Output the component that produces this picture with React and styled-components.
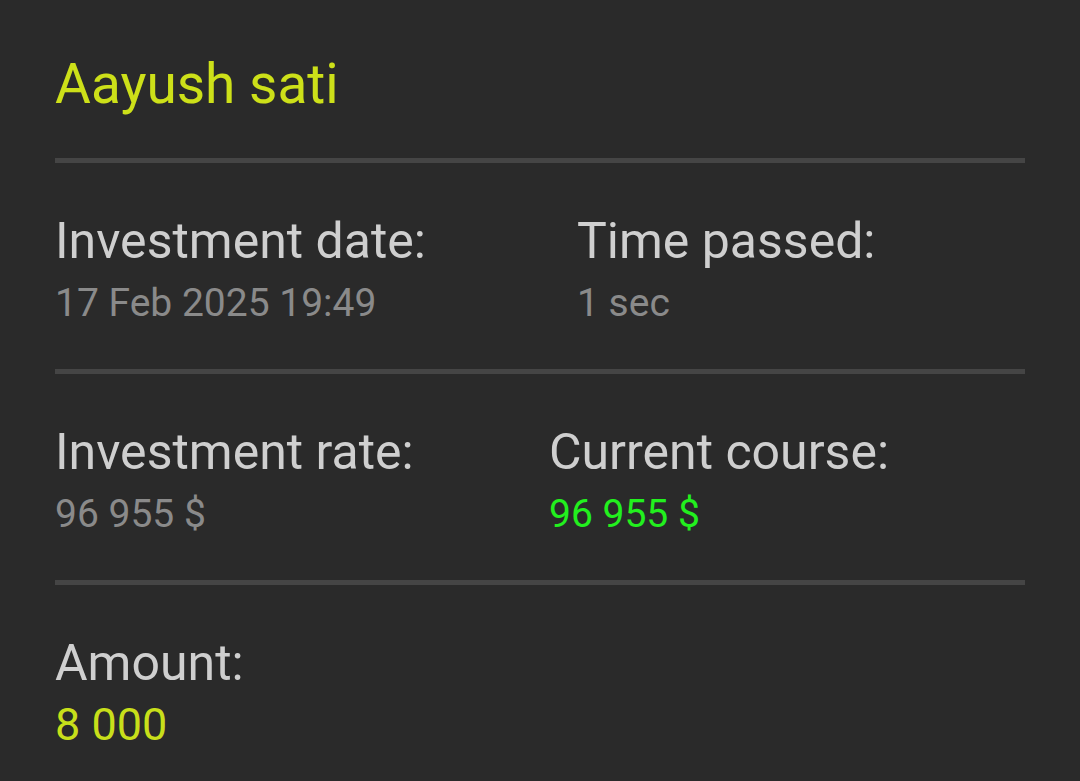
import React from "react";
import styled, { createGlobalStyle } from "styled-components";

const Global = createGlobalStyle`
  html, body { margin: 0; padding: 0; background: #2a2a2a; }
  body { font-family: Roboto, "Noto Sans", "Liberation Sans", sans-serif; }
`;

const Page = styled.div`
  width: 1080px;
  min-height: 781px;
  background: #2a2a2a;
  box-sizing: border-box;
  padding: 51px 55px 0 55px;
`;

const Title = styled.div`
  font-size: 55px;
  line-height: 66px;
  color: #cde019;
  margin: 0 0 41px 0;
`;

const Divider = styled.div`
  height: 5px;
  width: 970px;
  background: #454545;
`;

const Section = styled.div`
  display: grid;
  grid-template-columns: ${(p) => p.$split || "100%"} auto;
  padding: 49px 0 42px 0;
`;

const Field = styled.div`
  display: flex;
  flex-direction: column;
  gap: 9px;
`;

const Label = styled.div`
  font-size: 50px;
  line-height: 58px;
  color: #cfcfcf;
  white-space: nowrap;
`;

const Value = styled.div`
  font-size: ${(p) => p.$size || 39}px;
  line-height: 48px;
  color: ${(p) => p.$color || "#8a8a8a"};
  white-space: nowrap;
`;

export default function App() {
  return (
    <>
      <Global />
      <Page>
        <Title>Aayush sati</Title>
        <Divider />
        <Section $split="522px">
          <Field>
            <Label>Investment date:</Label>
            <Value>17 Feb 2025 19:49</Value>
          </Field>
          <Field>
            <Label>Time passed:</Label>
            <Value>1 sec</Value>
          </Field>
        </Section>
        <Divider />
        <Section $split="494px">
          <Field>
            <Label>Investment rate:</Label>
            <Value>96 955 $</Value>
          </Field>
          <Field>
            <Label>Current course:</Label>
            <Value $color="#22f01e">96 955 $</Value>
          </Field>
        </Section>
        <Divider />
        <Section>
          <Field>
            <Label>Amount:</Label>
            <Value $size={45} $color="#c8df1a">8 000</Value>
          </Field>
        </Section>
      </Page>
    </>
  );
}
